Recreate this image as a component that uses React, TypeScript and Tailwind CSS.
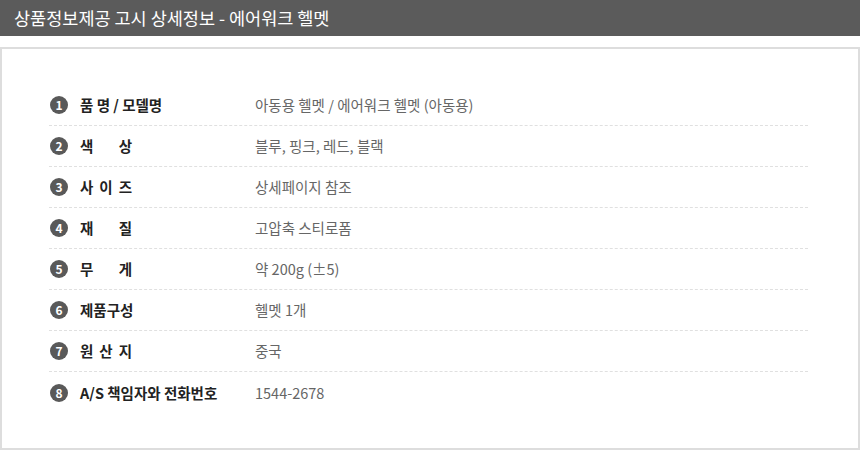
const rows: { label: string | string[]; value: string }[] = [
  { label: '품 명 / 모델명', value: '아동용 헬멧 / 에어워크 헬멧 (아동용)' },
  { label: ['색', '상'], value: '블루, 핑크, 레드, 블랙' },
  { label: ['사', '이', '즈'], value: '상세페이지 참조' },
  { label: ['재', '질'], value: '고압축 스티로폼' },
  { label: ['무', '게'], value: '약 200g (±5)' },
  { label: '제품구성', value: '헬멧 1개' },
  { label: ['원', '산', '지'], value: '중국' },
  { label: 'A/S 책임자와 전화번호', value: '1544-2678' },
];

export default function App() {
  return (
    <div className="w-[860px] h-[451px] bg-white font-['Noto_Sans_CJK_KR','Noto_Sans',sans-serif]">
      {/* Header */}
      <div className="h-[36px] bg-[#5b5b5b] flex items-center px-[14px]">
        <h1 className="text-[17.5px] text-white">상품정보제공 고시 상세정보 - 에어워크 헬멧</h1>
      </div>

      {/* Info box */}
      <div className="mt-[11px] h-[403px] border-2 border-[#dddddd] pl-[47px] pr-[50px] pt-[36px]">
        {rows.map((row, i) => (
          <div
            key={i}
            className={`h-[41px] flex items-center ${i < rows.length - 1 ? 'border-b border-dashed border-[#e0e0e0]' : ''}`}
          >
            <span className="w-[18px] h-[18px] ml-[1px] rounded-full bg-[#595959] text-white text-[12px] font-bold flex items-center justify-center leading-none">
              {i + 1}
            </span>
            <div className="w-[187px] pl-[12px] text-[14.5px] font-bold text-[#222]">
              {Array.isArray(row.label) ? (
                <span className="w-[52px] flex justify-between">
                  {row.label.map((c) => (
                    <span key={c}>{c}</span>
                  ))}
                </span>
              ) : (
                row.label
              )}
            </div>
            <div className="text-[14.5px] text-[#666]">{row.value}</div>
          </div>
        ))}
      </div>
    </div>
  );
}
